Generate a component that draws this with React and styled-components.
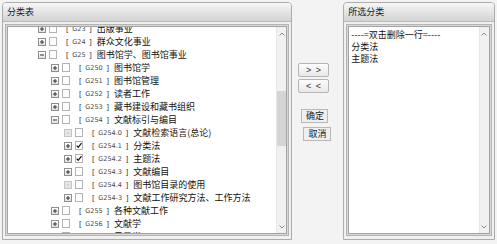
import React, { useEffect, useRef } from "react";
import styled, { createGlobalStyle } from "styled-components";

const GlobalStyle = createGlobalStyle`
  html, body {
    margin: 0;
    padding: 0;
    background: #f3f3f3;
  }
  body {
    font-family: "Noto Sans CJK SC", "Liberation Sans", sans-serif;
    color: #333;
  }
`;

const tree = [
  { code: "G", name: "文化、科学、教育、体育", level: 0, state: "minus" },
  { code: "G2", name: "信息与知识传播", level: 1, state: "minus" },
  { code: "G20", name: "信息与传播理论", level: 2, state: "plus" },
  { code: "G21", name: "新闻学、新闻事业", level: 2, state: "plus" },
  { code: "G22", name: "广播、电视事业", level: 2, state: "plus" },
  { code: "G23", name: "出版事业", level: 2, state: "plus" },
  { code: "G24", name: "群众文化事业", level: 2, state: "plus" },
  { code: "G25", name: "图书馆学、图书馆事业", level: 2, state: "minus" },
  { code: "G250", name: "图书馆学", level: 3, state: "plus" },
  { code: "G251", name: "图书馆管理", level: 3, state: "plus" },
  { code: "G252", name: "读者工作", level: 3, state: "plus" },
  { code: "G253", name: "藏书建设和藏书组织", level: 3, state: "plus" },
  { code: "G254", name: "文献标引与编目", level: 3, state: "minus" },
  { code: "G254.0", name: "文献检索语言(总论)", level: 4, state: "leaf" },
  { code: "G254.1", name: "分类法", level: 4, state: "plus", checked: true },
  { code: "G254.2", name: "主题法", level: 4, state: "plus", checked: true },
  { code: "G254.3", name: "文献编目", level: 4, state: "plus" },
  { code: "G254.4", name: "图书馆目录的使用", level: 4, state: "leaf" },
  { code: "G254-3", name: "文献工作研究方法、工作方法", level: 4, state: "plus" },
  { code: "G255", name: "各种文献工作", level: 3, state: "plus" },
  { code: "G256", name: "文献学", level: 3, state: "plus" },
  { code: "G257", name: "目录学", level: 3, state: "plus" },
  { code: "G258", name: "各类型图书馆、图书馆事业", level: 3, state: "plus" },
];

const selected = ["----=双击删除一行=----", "分类法", "主题法"];

const Page = styled.div`
  display: flex;
  align-items: flex-start;
  padding: 2px 2px 0 2px;
  height: 242px;
`;

const Panel = styled.div`
  width: ${(p) => p.width}px;
  height: 238px;
  box-sizing: border-box;
  border: 1px solid #acacac;
  border-radius: 4px 4px 0 0;
  background: #f0f0f0;
  display: flex;
  flex-direction: column;
  overflow: hidden;
`;

const PanelHeader = styled.div`
  height: 18px;
  flex-shrink: 0;
  line-height: 18px;
  padding-left: 4px;
  font-size: 9px;
  color: #1a1a1a;
  background: linear-gradient(#f6f6f6, #d3d3d3);
  border-bottom: 1px solid #b9b9b9;
`;

const PanelBody = styled.div`
  flex: 1;
  min-height: 0;
  padding: 3px 3px 4px 3px;
  display: flex;
`;

const ListBox = styled.div`
  flex: 1;
  display: flex;
  background: #fff;
  border: 1px solid #a2a2a2;
  box-shadow: 0 0 0 1px #d9d9d9, 0 0 0 2px #b4b4b4;
  margin: 1px;
  min-width: 0;
  min-height: 0;
  overflow: hidden;
`;

const TreeList = styled.div`
  flex: 1;
  overflow: hidden;
  min-width: 0;
`;

const Row = styled.div`
  height: 13px;
  display: flex;
  align-items: center;
  padding-left: ${(p) => 4 + p.level * 13}px;
  white-space: nowrap;
`;

const Expander = styled.span`
  width: 8px;
  height: 8px;
  box-sizing: border-box;
  border: 1px solid ${(p) => (p.leaf ? "#c4c4c4" : "#8f8f8f")};
  background: ${(p) => (p.leaf ? "#e6e6e6" : "linear-gradient(#ffffff, #e2e2e2)")};
  display: flex;
  align-items: center;
  justify-content: center;
  flex-shrink: 0;
`;

const Check = styled.span`
  width: 8px;
  height: 9px;
  box-sizing: border-box;
  border: 1px solid #b3b3b3;
  background: #fff;
  margin-left: 3px;
  display: flex;
  align-items: center;
  justify-content: center;
  flex-shrink: 0;
`;

const Label = styled.span`
  margin-left: 9px;
  font-size: 9px;
  color: #111;
  display: flex;
  align-items: center;
`;

const Bracket = styled.span`
  font-family: "Liberation Sans", sans-serif;
  font-size: 8px;
  color: #3a3a3a;
`;

const Code = styled.span`
  font-family: "DejaVu Sans", sans-serif;
  font-size: 6.5px;
  color: #4a4a4a;
  margin: 0 4px;
`;

const Name = styled.span`
  margin-left: 5px;
`;

const ScrollBar = styled.div`
  width: 10px;
  flex-shrink: 0;
  background: #f1f1f1;
  border-left: 1px solid #e6e6e6;
  display: flex;
  flex-direction: column;
  align-items: center;
  justify-content: space-between;
  position: relative;
  padding: 5px 0 4px;
  box-sizing: border-box;
`;

const Thumb = styled.div`
  position: absolute;
  left: 0;
  right: 0;
  top: ${(p) => p.top}px;
  height: ${(p) => p.size}px;
  background: #d5d5d5;
`;

const Middle = styled.div`
  width: 51px;
  display: flex;
  flex-direction: column;
  align-items: flex-start;
  padding-top: 61px;
`;

const ArrowButton = styled.button`
  width: 31px;
  height: 14px;
  margin: 0 0 2px 6px;
  padding: 0;
  border: 1px solid #b4b4b4;
  border-radius: 2px;
  background: linear-gradient(#fdfdfd, #e8e8e8);
  font-family: "Liberation Sans", sans-serif;
  font-size: 9px;
  color: #333;
  line-height: 12px;
  letter-spacing: 1px;
`;

const ActionButton = styled.button`
  width: ${(p) => p.width}px;
  height: 14px;
  margin: ${(p) => p.top}px 0 0 ${(p) => p.left}px;
  padding: 0;
  border: 1px solid #b8b8b8;
  background: #efefef;
  font-family: "Noto Sans CJK SC", sans-serif;
  font-size: 9px;
  color: #1a1a1a;
  line-height: 12px;
`;

const SelectedList = styled.div`
  flex: 1;
  padding: 2px 2px;
  font-size: 9px;
  color: #111;
  line-height: 12px;
`;

function ExpanderIcon({ state }) {
  if (state === "leaf") {
    return (
      <svg width="6" height="6" viewBox="0 0 6 6">
        <rect x="2.5" y="2.5" width="1" height="1" fill="#999" />
      </svg>
    );
  }
  return (
    <svg width="6" height="6" viewBox="0 0 6 6">
      <rect x="1" y="2.5" width="4" height="1" fill="#333" />
      {state === "plus" && <rect x="2.5" y="1" width="1" height="4" fill="#333" />}
    </svg>
  );
}

function CheckMark() {
  return (
    <svg width="7" height="7" viewBox="0 0 7 7">
      <path d="M0.8 3.6 L2.6 5.6 L6.4 0.8" fill="none" stroke="#111" strokeWidth="1.4" />
    </svg>
  );
}

function Chevron({ up }) {
  return (
    <svg width="6" height="4" viewBox="0 0 6 4">
      <path d={up ? "M0.5 3.5 L3 1 L5.5 3.5" : "M0.5 0.5 L3 3 L5.5 0.5"} fill="none" stroke="#8a8a8a" strokeWidth="1" />
    </svg>
  );
}

function App() {
  const listRef = useRef(null);

  useEffect(() => {
    if (listRef.current) listRef.current.scrollTop = 70;
  }, []);

  return (
    <>
      <GlobalStyle />
      <Page>
        <Panel width={291}>
          <PanelHeader>分类表</PanelHeader>
          <PanelBody>
            <ListBox>
              <TreeList ref={listRef}>
                {tree.map((node) => (
                  <Row key={node.code} level={node.level}>
                    <Expander leaf={node.state === "leaf"}>
                      <ExpanderIcon state={node.state} />
                    </Expander>
                    <Check>{node.checked && <CheckMark />}</Check>
                    <Label>
                      <Bracket>[</Bracket>
                      <Code>{node.code}</Code>
                      <Bracket>]</Bracket>
                      <Name>{node.name}</Name>
                    </Label>
                  </Row>
                ))}
              </TreeList>
              <ScrollBar>
                <Chevron up />
                <Thumb top={64} size={55} />
                <Chevron />
              </ScrollBar>
            </ListBox>
          </PanelBody>
        </Panel>

        <Middle>
          <ArrowButton>&gt; &gt;</ArrowButton>
          <ArrowButton>&lt; &lt;</ArrowButton>
          <ActionButton width={27} top={14} left={9}>确定</ActionButton>
          <ActionButton width={28} top={4} left={11}>取消</ActionButton>
        </Middle>

        <Panel width={152}>
          <PanelHeader>所选分类</PanelHeader>
          <PanelBody>
            <ListBox>
              <SelectedList>
                {selected.map((s) => (
                  <div key={s}>{s}</div>
                ))}
              </SelectedList>
              <ScrollBar>
                <Chevron up />
                <Chevron />
              </ScrollBar>
            </ListBox>
          </PanelBody>
        </Panel>
      </Page>
    </>
  );
}

export default App;
